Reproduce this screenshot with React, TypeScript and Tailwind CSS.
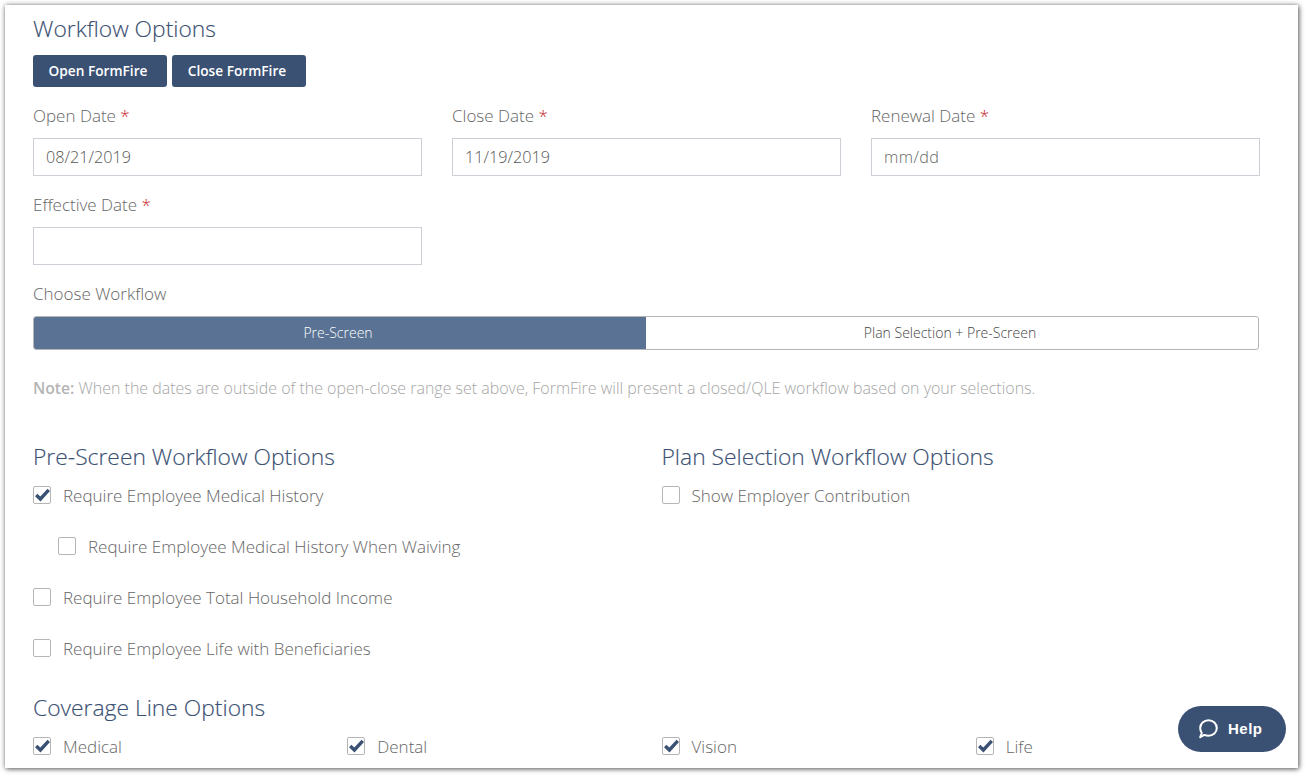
import { useState } from "react";

function Check({ label, checked = false, className = "" }: { label: string; checked?: boolean; className?: string }) {
  return (
    <label className={`flex items-center h-[20px] text-[17px] font-light text-[#666] ${className}`}>
      <span className="relative w-[18px] h-[18px] -mt-[2px] shrink-0 border border-[#b5b5b5] rounded-[2px] bg-white mr-[12px]">
        {checked && (
          <svg className="absolute left-[1px] top-[0px]" width="15" height="15" viewBox="0 0 15 15">
            <path d="M1.2 8 L5.4 12 L13.8 2.8" fill="none" stroke="#3b5173" strokeWidth="3.4" />
          </svg>
        )}
      </span>
      {label}
    </label>
  );
}

function DateField({ label, value, placeholder }: { label: string; value?: string; placeholder?: string }) {
  return (
    <div className="w-[389px]">
      <div className="h-[22px] leading-[22px] text-[17px] font-light text-[#666]">
        {label} <span className="text-[#c4161c]">*</span>
      </div>
      <input
        readOnly
        value={value ?? ""}
        placeholder={placeholder}
        className="block mt-[11px] w-full h-[38px] px-[12px] border border-[#ccd0d6] text-[16.2px] font-light text-[#555] placeholder:text-[#666] placeholder:tracking-[0.4px] outline-none"
      />
    </div>
  );
}

function Heading({ children, className = "" }: { children: string; className?: string }) {
  return <h2 className={`pt-[1px] text-[22.85px] leading-[29px] font-light text-[#3b5173] [-webkit-text-stroke:0.15px_#3b5173] ${className}`}>{children}</h2>;
}

export default function App() {
  const [workflow] = useState("pre");
  return (
    <div className="w-[1307px] h-[777px] bg-white p-[5px] pr-[9px] pb-[9px] overflow-hidden font-['Open_Sans',sans-serif]">
      <div className="relative h-[763px] overflow-hidden bg-white pl-[28px] pt-[8px] shadow-[1px_1px_5px_rgba(0,0,0,0.6),0_0_5px_rgba(0,0,0,0.2)]">
        <Heading>Workflow Options</Heading>

        <div className="flex gap-[5px] mt-[12px]">
          <button className="w-[134px] h-[32px] pr-[4px] rounded-[3px] bg-[#3b5173] text-white text-[13.7px] font-semibold">Open FormFire</button>
          <button className="w-[134px] h-[32px] pr-[4px] rounded-[3px] bg-[#3b5173] text-white text-[13.7px] font-semibold">Close FormFire</button>
        </div>

        <div className="flex gap-[30px] mt-[18px]">
          <DateField label="Open Date" value="08/21/2019" />
          <DateField label="Close Date" value="11/19/2019" />
          <DateField label="Renewal Date" placeholder="mm/dd" />
        </div>
        <div className="mt-[18px]">
          <DateField label="Effective Date" />
        </div>

        <div className="mt-[18px] h-[22px] leading-[22px] text-[17px] font-light text-[#666]">Choose Workflow</div>
        <div className="flex w-[1226px] h-[34px] mt-[11px] rounded-[3px] border border-[#b5b5b5] overflow-hidden text-[14px] font-light">
          <div className={`w-[612px] flex items-center justify-center pr-[4px] pb-[2px] ${workflow === "pre" ? "bg-[#5a7394] text-white" : ""}`}>Pre-Screen</div>
          <div className="flex-1 flex items-center justify-center pr-[4px] pb-[2px] text-[#444]">Plan Selection + Pre-Screen</div>
        </div>

        <p className="mt-[27px] h-[22px] leading-[22px] text-[15.98px] font-light text-[#a5a5a5] whitespace-nowrap">
          <strong className="text-[15.7px] font-semibold text-[#b5b5b5]">Note:</strong> When the dates are outside of the open-close range set above, FormFire will present a closed/QLE workflow based on your selections.
        </p>

        <div className="grid grid-cols-2 w-[1257px] mt-[42px]">
          <div>
            <Heading>Pre-Screen Workflow Options</Heading>
            <div className="flex flex-col gap-[31px] mt-[15px]">
              <Check label="Require Employee Medical History" checked />
              <Check label="Require Employee Medical History When Waiving" className="ml-[25px]" />
              <Check label="Require Employee Total Household Income" />
              <Check label="Require Employee Life with Beneficiaries" />
            </div>
          </div>
          <div>
            <Heading>Plan Selection Workflow Options</Heading>
            <div className="mt-[15px]">
              <Check label="Show Employer Contribution" />
            </div>
          </div>
        </div>

        <Heading className="mt-[33px]">Coverage Line Options</Heading>
        <div className="grid grid-cols-4 w-[1257px] mt-[15px]">
          <Check label="Medical" checked />
          <Check label="Dental" checked />
          <Check label="Vision" checked />
          <Check label="Life" checked />
        </div>

        <button className="absolute right-[12px] bottom-[16px] flex items-center gap-[9px] pl-[19px] w-[108px] h-[46px] rounded-full bg-[#3b5173] text-white text-[15px] font-bold font-['Liberation_Sans',sans-serif] tracking-[0.5px]">
          <svg width="22" height="22" viewBox="0 0 22 22" fill="none">
            <path d="M11.5 2.2 C16.2 2.2 19.8 5.6 19.8 10 C19.8 14.5 16.2 17.8 11.5 17.8 C10 17.8 8.6 17.5 7.4 16.9 L3.2 19.2 L4.8 15 C3.7 13.6 3.2 11.9 3.2 10 C3.2 5.6 6.8 2.2 11.5 2.2 Z" stroke="#fff" strokeWidth="2" strokeLinejoin="round" />
          </svg>
          <span className="pt-[1px]">Help</span>
        </button>
      </div>
    </div>
  );
}
